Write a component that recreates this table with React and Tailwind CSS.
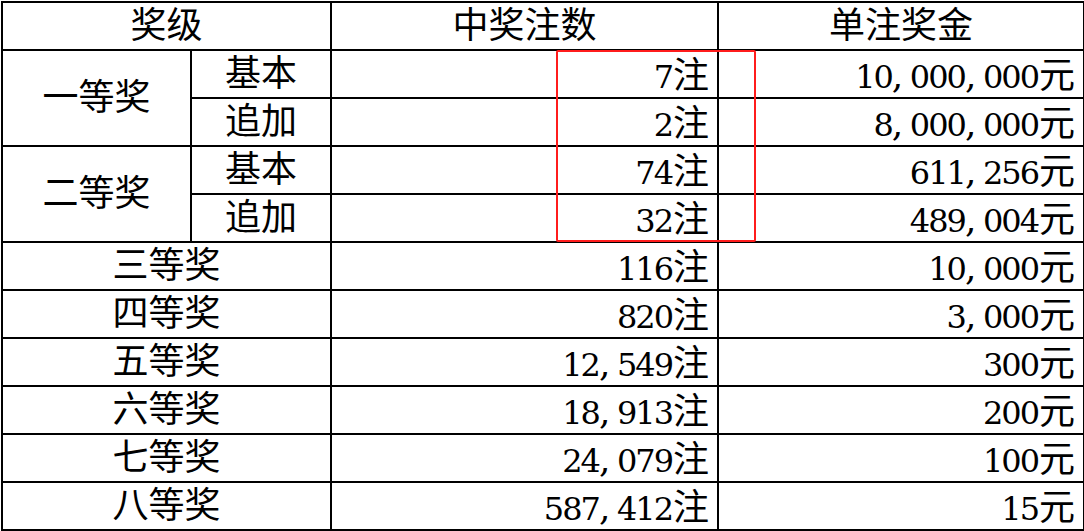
const rows = [
  { level: "三等奖", count: "116", prize: "10,000" },
  { level: "四等奖", count: "820", prize: "3,000" },
  { level: "五等奖", count: "12,549", prize: "300" },
  { level: "六等奖", count: "18,913", prize: "200" },
  { level: "七等奖", count: "24,079", prize: "100" },
  { level: "八等奖", count: "587,412", prize: "15" },
];

const tiers = [
  {
    level: "一等奖",
    items: [
      { type: "基本", count: "7", prize: "10,000,000" },
      { type: "追加", count: "2", prize: "8,000,000" },
    ],
  },
  {
    level: "二等奖",
    items: [
      { type: "基本", count: "74", prize: "611,256" },
      { type: "追加", count: "32", prize: "489,004" },
    ],
  },
];

// digits and commas are half-width in the sheet font
const Num = ({ value, unit }) => (
  <>
    {value.split(",").map((part, i) => (
      <span key={i}>
        {i > 0 && <span className="inline-block w-[18px] text-left">,</span>}
        <span className="font-['DejaVu_Serif',serif] text-[32px] tracking-[-2px]">{part}</span>
      </span>
    ))}
    <span className="font-['Noto_Sans_CJK_SC',sans-serif] ml-[1px]">{unit}</span>
  </>
);

const cell =
  "border-2 border-black h-[48px] p-0 leading-none font-['DejaVu_Serif','Noto_Sans_CJK_SC',serif]";

const App = () => {
  return (
    <div className="relative w-[1084px] h-[531px] bg-white overflow-hidden text-black text-[36px] font-['DejaVu_Serif','Noto_Sans_CJK_SC',serif]">
      <table className="table-fixed border-collapse w-[1082px] ml-[1px] mt-[1px]">
        <colgroup>
          <col className="w-[189px]" />
          <col className="w-[140px]" />
          <col className="w-[387px]" />
          <col className="w-[366px]" />
        </colgroup>
        <thead>
          <tr>
            <th colSpan={2} className={`${cell} font-normal text-center`}>奖级</th>
            <th className={`${cell} font-normal text-center`}>中奖注数</th>
            <th className={`${cell} font-normal text-center`}>单注奖金</th>
          </tr>
        </thead>
        <tbody>
          {tiers.map((tier) =>
            tier.items.map((item, idx) => (
              <tr key={tier.level + item.type}>
                {idx === 0 && (
                  <td rowSpan={2} className={`${cell} text-center`}>{tier.level}</td>
                )}
                <td className={`${cell} text-center`}>{item.type}</td>
                <td className={`${cell} text-right pr-[8px]`}>
                  <Num value={item.count} unit="注" />
                </td>
                <td className={`${cell} text-right pr-[8px]`}>
                  <Num value={item.prize} unit="元" />
                </td>
              </tr>
            ))
          )}
          {rows.map((row) => (
            <tr key={row.level}>
              <td colSpan={2} className={`${cell} text-center`}>{row.level}</td>
              <td className={`${cell} text-right pr-[8px]`}>
                <Num value={row.count} unit="注" />
              </td>
              <td className={`${cell} text-right pr-[8px]`}>
                <Num value={row.prize} unit="元" />
              </td>
            </tr>
          ))}
        </tbody>
      </table>

      {/* red highlight box over the first/second prize counts */}
      <div className="absolute left-[556px] top-[50px] w-[200px] h-[192px] border-2 border-[#ff1c1c] rounded-[2px] pointer-events-none" />
    </div>
  );
};

export default App;
